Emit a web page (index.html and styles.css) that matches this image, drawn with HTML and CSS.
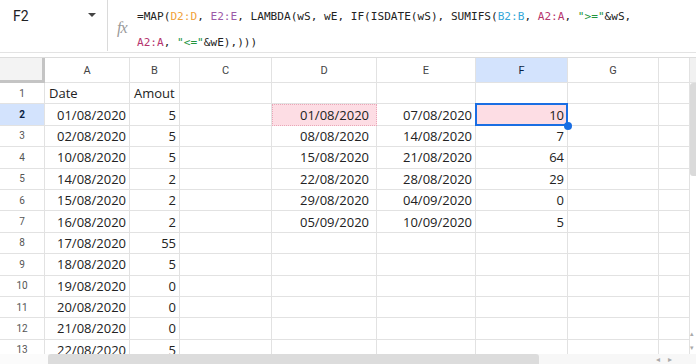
FILE: index.html
```html
<!DOCTYPE html>
<html lang="en">
<head>
  <meta charset="UTF-8" />
  <meta name="viewport" content="width=device-width, initial-scale=1.0"/>
  <title>Sheet - MAP LAMBDA</title>
  <link rel="stylesheet" href="styles.css">
</head>
<body>

  <div class="formula-bar">
    <div class="name-box">
      <span>F2</span>
      <span class="caret"></span>
    </div>
    <div class="fx">fx</div>
    <div class="formula">
      <div>=MAP(<span class="r-d">D2:D</span>, <span class="r-e">E2:E</span>, LAMBDA(wS, wE, IF(ISDATE(wS), SUMIFS(<span class="r-b">B2:B</span>, <span class="r-a">A2:A</span>, <span class="str">"&gt;="</span>&amp;wS,</div>
      <div><span class="r-a">A2:A</span>, <span class="str">"&lt;="</span>&amp;wE),)))</div>
    </div>
  </div>

  <div class="grid-area">
    <div class="sheet" id="sheet"></div>
    <div class="vscroll">
      <div class="vhead"></div>
      <div class="vthumb"></div>
      <div class="varrows">
        <span>&#9652;</span>
        <span>&#9662;</span>
      </div>
    </div>
  </div>

  <div class="hscroll">
    <div class="hcorner"></div>
    <div class="htrack"><div class="hthumb"></div></div>
    <div class="harrows">
      <span>&#9666;</span>
      <span>&#9656;</span>
    </div>
  </div>

  <script>
    const cols = ['', 'A', 'B', 'C', 'D', 'E', 'F', 'G', ''];

    // A, B, C, D, E, F, G, H
    const rows = [
      ['Date', 'Amout', '', '', '', '', '', ''],
      ['01/08/2020', '5', '', '01/08/2020', '07/08/2020', '10', '', ''],
      ['02/08/2020', '5', '', '08/08/2020', '14/08/2020', '7', '', ''],
      ['10/08/2020', '5', '', '15/08/2020', '21/08/2020', '64', '', ''],
      ['14/08/2020', '2', '', '22/08/2020', '28/08/2020', '29', '', ''],
      ['15/08/2020', '2', '', '29/08/2020', '04/09/2020', '0', '', ''],
      ['16/08/2020', '2', '', '05/09/2020', '10/09/2020', '5', '', ''],
      ['17/08/2020', '55', '', '', '', '', '', ''],
      ['18/08/2020', '5', '', '', '', '', '', ''],
      ['19/08/2020', '0', '', '', '', '', '', ''],
      ['20/08/2020', '0', '', '', '', '', '', ''],
      ['21/08/2020', '0', '', '', '', '', '', ''],
      ['22/08/2020', '5', '', '', '', '', '', '']
    ];

    const sheet = document.getElementById('sheet');

    function cell(text, cls) {
      const div = document.createElement('div');
      div.className = cls;
      div.textContent = text;
      sheet.appendChild(div);
      return div;
    }

    // Column headers
    cols.forEach((c, i) => {
      let cls = i === 0 ? 'corner' : 'col-head';
      if (c === 'F') cls += ' active';
      cell(c, cls);
    });

    // Data rows
    rows.forEach((row, r) => {
      cell(r + 1, r === 1 ? 'row-head active' : 'row-head');
      row.forEach((value, c) => {
        let cls = 'cell';
        if (/^[\d\/]+$/.test(value)) cls += ' num';
        if (c === 3) cls += ' col-d';
        if (r === 1 && c === 3) cls += ' hl';
        if (r === 1 && c === 5) cls += ' hl selected';
        cell(value, cls);
      });
    });
  </script>
</body>
</html>
```

FILE: styles.css
```css
* {
  box-sizing: border-box;
}

body {
  margin: 0;
  width: 696px;
  height: 364px;
  overflow: hidden;
  background: #fff;
  font-family: "Open Sans", Arial, sans-serif;
  color: #222;
}

/* formula bar */

.formula-bar {
  display: flex;
  height: 53px;
  border-bottom: 1px solid #e3e3e3;
  margin-bottom: 4px;
}

.name-box {
  width: 108px;
  display: flex;
  justify-content: space-between;
  align-items: flex-start;
  padding: 7px 11px 0 13px;
  margin-bottom: 1px;
  border-right: 1px solid #dadada;
  font-family: Roboto, sans-serif;
  font-size: 14px;
  color: #202124;
}

.name-box span:first-child {
  line-height: 18px;
}

.caret {
  margin-top: 6px;
  width: 0;
  height: 0;
  border-left: 4px solid transparent;
  border-right: 4px solid transparent;
  border-top: 4px solid #444;
}

.fx {
  width: 29px;
  padding: 19px 0 0 9px;
  font-family: "Liberation Serif", serif;
  font-style: italic;
  font-size: 16px;
  color: #9a9a9a;
  letter-spacing: -1px;
}

.formula {
  padding-top: 4px;
  font-family: "DejaVu Sans Mono", monospace;
  font-size: 11.1px;
  line-height: 26px;
  color: #222;
  white-space: nowrap;
}

.r-d { color: #f0a23a; }
.r-e { color: #9c5aa8; }
.r-b { color: #34a7d8; }
.r-a { color: #b5346d; }
.str { color: #22953e; }

/* grid */

.grid-area {
  display: flex;
}

.sheet {
  width: 690px;
  height: 297px;
  overflow: hidden;
  display: grid;
  grid-template-columns: 45px 85px 50px 92px 105px 99px 92px 91px 31px;
  grid-template-rows: 25px;
  grid-auto-rows: 21.4px;
  border-top: 1px solid #dcdcdc;
}

.sheet > div {
  border-right: 1px solid #e2e2e2;
  border-bottom: 1px solid #e2e2e2;
  display: flex;
  align-items: center;
  white-space: nowrap;
}

.corner {
  background: #f3f3f3;
  border-right: 3px solid #c4c4c4 !important;
  border-bottom: 3px solid #c4c4c4 !important;
}

.col-head {
  justify-content: center;
  font-family: Roboto, sans-serif;
  font-size: 11px;
  color: #444;
  padding-top: 1px;
}

.row-head {
  justify-content: center;
  font-family: Roboto, sans-serif;
  font-size: 10px;
  color: #555;
}

.active {
  background: #d3e3fd;
  color: #0b1f44;
}

.row-head.active {
  font-weight: bold;
}

.cell {
  font-size: 13px;
  padding: 0 3px 0 4px;
}

.cell.num {
  justify-content: flex-end;
}

.cell.col-d {
  padding-right: 7px;
}

.hl {
  background: #fddde4;
}

.cell.col-d.hl {
  border: 1px dotted #e9a8b8;
}

.selected {
  position: relative;
}

.selected::before {
  content: "";
  position: absolute;
  left: -1px;
  top: -1px;
  right: -1px;
  bottom: -1px;
  border: 2px solid #1a6ee3;
}

.selected::after {
  content: "";
  position: absolute;
  right: -5px;
  bottom: -5px;
  width: 8px;
  height: 8px;
  border-radius: 50%;
  background: #1a6ee3;
  z-index: 2;
}

/* scrollbars */

.vscroll {
  width: 6px;
  height: 297px;
  display: flex;
  flex-direction: column;
  border-top: 1px solid #dcdcdc;
}

.vhead {
  height: 25px;
  background: #f1f1f1;
  border-bottom: 1px solid #e2e2e2;
}

.vthumb {
  height: 93px;
  background: #dadada;
  border-radius: 3px 0 0 3px;
}

.varrows {
  margin-top: auto;
  margin-bottom: 2px;
  display: flex;
  flex-direction: column;
  gap: 6px;
  font-size: 7px;
  line-height: 8px;
  color: #aaa;
}

.hscroll {
  height: 10px;
  display: flex;
  background: #f7f7f7;
}

.hcorner {
  width: 48px;
  background: #fbfbfb;
}

.htrack {
  width: 608px;
}

.hthumb {
  width: 491px;
  height: 10px;
  background: #dcdcdc;
  border-radius: 3px 3px 0 0;
}

.harrows {
  display: flex;
  gap: 8px;
  font-size: 8px;
  line-height: 10px;
  color: #aaa;
}
```
